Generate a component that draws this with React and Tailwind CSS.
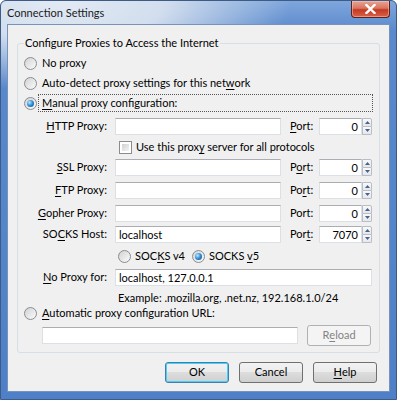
import React from 'react';

const font = "font-['Lato','Noto_Sans',sans-serif]";

const K = ({ children }) => <span className="underline underline-offset-[2px] decoration-[1px]">{children}</span>;

const Radio = ({ checked }) => (
    <span className="inline-flex w-[13px] h-[13px] shrink-0 items-center justify-center rounded-full border border-[#8a8c8e] bg-[linear-gradient(135deg,#d0d2d4,#fbfbfb)]">
        {checked && <span className="w-[7px] h-[7px] rounded-full bg-[radial-gradient(circle_at_35%_35%,#b8e8ff_0%,#2f8ad3_50%,#0c4a86_100%)]" />}
    </span>
);

const Checkbox = () => (
    <span className="inline-flex w-[13px] h-[13px] shrink-0 border border-[#8a8c8e] bg-white p-[2px]">
        <span className="w-full h-full bg-[linear-gradient(135deg,#cfd1d3,#f4f4f4)]" />
    </span>
);

const TextInput = ({ value, className }) => (
    <div className={`h-[17px] bg-white border border-[#dbdfe6] border-t-[#abadb3] flex items-center px-[3px] leading-none ${className}`}>
        {value}
    </div>
);

const Arrow = ({ up }) => (
    <svg width="5" height="3" viewBox="0 0 5 3">
        <path d={up ? 'M0 3 L2.5 0 L5 3 Z' : 'M0 0 L2.5 3 L5 0 Z'} fill="#4d6185" />
    </svg>
);

const PortField = ({ value }) => (
    <div className="flex items-center">
        <TextInput value={value} className="w-[43px] justify-end" />
        <div className="flex flex-col w-[10px] h-[17px]">
            <div className="h-[9px] border border-[#b9bdc4] rounded-tr-[2px] bg-[linear-gradient(#f8f9fa,#e4e8ee)] flex items-center justify-center"><Arrow up /></div>
            <div className="h-[8px] border border-t-0 border-[#b9bdc4] rounded-br-[2px] bg-[linear-gradient(#f8f9fa,#e4e8ee)] flex items-center justify-center"><Arrow /></div>
        </div>
    </div>
);

const ProxyRow = ({ label, value, portLabel, port, className }) => (
    <div className={`flex items-center ${className}`}>
        <div className="w-[83px] text-right">{label}</div>
        <TextInput value={value} className="w-[166px] ml-[8px]" />
        <div className="ml-[9px] w-[29px]">{portLabel}</div>
        <PortField value={port} />
    </div>
);

const Button = ({ children, primary, disabled, className }) => (
    <div className={`w-[64px] h-[21px] rounded-[3px] border flex items-center justify-center ${primary ? 'border-[#3c7fb1] shadow-[inset_0_0_0_1px_#48d0f8]' : disabled ? 'border-[#adb2b5]' : 'border-[#707070]'} ${disabled ? 'bg-[#f4f4f4] text-[#838383]' : 'bg-[linear-gradient(#f2f2f2_0%,#ebebeb_50%,#dddddd_50%,#cfcfcf_100%)] text-black'} ${className || ''}`}>
        {children}
    </div>
);

export default function App() {
    return (
        <div className={`${font} w-[397px] h-[400px] overflow-hidden text-[11px]`}>
            <div className="w-full h-full flex flex-col rounded-t-[6px] border border-[#3d5b84] bg-[#5585ca] bg-[radial-gradient(ellipse_230px_90px_at_60px_0px,#e2eaf4_0%,#d2deee_45%,rgba(200,215,235,0.6)_70%,rgba(85,133,202,0)_100%),linear-gradient(#7fa6dc_0px,#5a89cc_30px,#4f80c7_100%)]">
                {/* title bar */}
                <div className="h-[23px] flex items-start shrink-0">
                    <div className="pl-[6px] pt-[4px] text-[#1b1b1b] flex-1">Connection Settings</div>
                    <div className="mr-[6px] w-[39px] h-[17px] rounded-b-[4px] border border-t-0 border-[#5a2218] bg-[linear-gradient(#e8a593_0%,#d9745f_45%,#c43a22_55%,#d8614a_100%)] flex items-center justify-center shadow-[inset_0_0_0_1px_rgba(255,200,190,0.5)]">
                        <svg width="11" height="10" viewBox="0 0 11 10">
                            <path d="M1.5 1 L9.5 9 M9.5 1 L1.5 9" stroke="#fff" strokeWidth="2.4" strokeLinecap="square" />
                        </svg>
                    </div>
                </div>

                {/* client area */}
                <div className="flex-1 mx-[6px] mb-[7px] border border-[#7593bb] bg-[#f0f0f0] text-black flex flex-col">
                    <fieldset className="mt-[10px] ml-[9px] mr-[9px] h-[318px] border border-[#d5dfe5] rounded-[3px] pl-[6px] pr-[6px] flex flex-col">
                        <legend className="px-[1px] leading-[16px]">Configure Proxies to Access the Internet</legend>

                        <div className="h-[20px] mt-[2px] flex items-center gap-[5px]"><Radio /><span>No proxy</span></div>
                        <div className="h-[20px] flex items-center gap-[5px]"><Radio /><span>Auto-detect proxy settings for this net<K>w</K>ork</span></div>
                        <div className="h-[20px] flex items-center">
                            <Radio checked />
                            <div className="ml-[1px] flex-1 h-[18px] border border-dotted border-[#555] flex items-center pl-[3px]"><K>M</K>anual proxy configuration:</div>
                        </div>

                        <ProxyRow className="h-[22px] mt-[2px]" label={<><K>H</K>TTP Proxy:</>} value="" portLabel={<><K>P</K>ort:</>} port="0" />
                        <div className="h-[20px] flex items-center pl-[95px] gap-[4px]"><Checkbox /><span>Use this prox<K>y</K> server for all protocols</span></div>
                        <ProxyRow className="h-[20px]" label={<><K>S</K>SL Proxy:</>} value="" portLabel={<>P<K>o</K>rt:</>} port="0" />
                        <ProxyRow className="h-[22px] mt-[2px]" label={<><K>F</K>TP Proxy:</>} value="" portLabel={<>Po<K>r</K>t:</>} port="0" />
                        <ProxyRow className="h-[22px] mt-[1px]" label={<><K>G</K>opher Proxy:</>} value="" portLabel={<>Port:</>} port="0" />
                        <ProxyRow className="h-[20px]" label={<>SO<K>C</K>KS Host:</>} value="localhost" portLabel={<>Por<K>t</K>:</>} port="7070" />

                        <div className="h-[20px] mt-[2px] flex items-center pl-[94px]">
                            <Radio /><span className="ml-[4px] w-[53px]">SOC<K>K</K>S v4</span>
                            <span className="ml-[4px] flex"><Radio checked /></span><span className="ml-[4px]">SOCKS <K>v</K>5</span>
                        </div>
                        <div className="h-[20px] mt-[1px] flex items-center">
                            <div className="w-[83px] text-right"><K>N</K>o Proxy for:</div>
                            <TextInput value="localhost, 127.0.0.1" className="w-[257px] ml-[8px]" />
                        </div>
                        <div className="h-[16px] mt-[3px] flex items-center pl-[94px]">Example: .mozilla.org, .net.nz, 192.168.1.0/24</div>
                        <div className="h-[14px] flex items-center gap-[5px]"><Radio /><span><K>A</K>utomatic proxy configuration URL:</span></div>
                        <div className="h-[21px] mt-[5px] flex items-center pl-[18px]">
                            <TextInput value="" className="w-[256px]" />
                            <Button disabled className="ml-[9px] w-[63px] h-[20px]">R<K>e</K>load</Button>
                        </div>
                    </fieldset>

                    <div className="flex justify-end gap-[10px] mt-[9px] mr-[12px]">
                        <Button primary>OK</Button>
                        <Button>Cancel</Button>
                        <Button><K>H</K>elp</Button>
                    </div>
                </div>
            </div>
        </div>
    );
}
